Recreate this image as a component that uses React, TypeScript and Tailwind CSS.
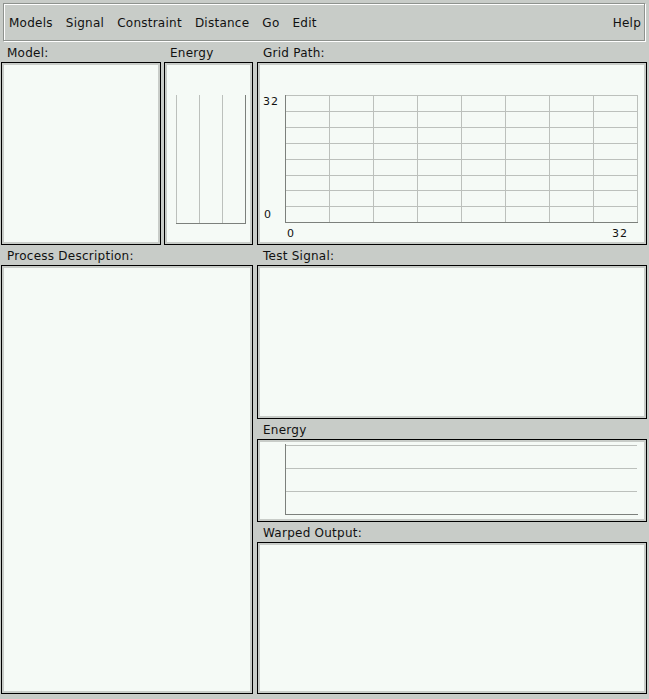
const MENUS = ['Models', 'Signal', 'Constraint', 'Distance', 'Go', 'Edit']

const FONT = "font-['DejaVu_Sans',sans-serif] text-[12px] tracking-[0.25px] text-[#111]"

function Label({ text }: { text: string }) {
  return <div className={`${FONT} h-[20px] leading-[22px] pl-[6px] whitespace-nowrap`}>{text}</div>
}

function Panel({ className = '', children }: { className?: string; children?: React.ReactNode }) {
  return (
    <div className={`border border-black ${className}`}>
      <div className="w-full h-full border-2 border-[#c8ccc8] bg-[#f5faf6] relative overflow-hidden">
        {children}
      </div>
    </div>
  )
}

function GridPath() {
  const cols = Array.from({ length: 9 }, (_, i) => 25 + i * 44)
  const rows = Array.from({ length: 9 }, (_, i) => Math.round(30 + i * 15.9))
  return (
    <svg width="384" height="177" className="block">
      {cols.slice(1).map(x => (
        <line key={'c' + x} x1={x + 0.5} y1={30} x2={x + 0.5} y2={157} stroke="#bcc0bc" />
      ))}
      {rows.slice(0, 8).map(y => (
        <line key={'r' + y} x1={25} y1={y + 0.5} x2={377} y2={y + 0.5} stroke="#bcc0bc" />
      ))}
      <line x1={25.5} y1={30} x2={25.5} y2={158} stroke="#7c807c" />
      <line x1={25} y1={157.5} x2={378} y2={157.5} stroke="#7c807c" />
      <g fontFamily="DejaVu Sans, sans-serif" fontSize="11" letterSpacing="1" fill="#111">
        <text x={3} y={40}>32</text>
        <text x={4} y={153}>0</text>
        <text x={27} y={172}>0</text>
        <text x={352} y={172}>32</text>
      </g>
    </svg>
  )
}

function SmallEnergy() {
  return (
    <svg width="83" height="177" className="block">
      {[9, 32, 55].map(x => (
        <line key={x} x1={x + 0.5} y1={30} x2={x + 0.5} y2={158} stroke="#bcc0bc" />
      ))}
      <line x1={78.5} y1={30} x2={78.5} y2={159} stroke="#7c807c" />
      <line x1={9} y1={158.5} x2={79} y2={158.5} stroke="#7c807c" />
    </svg>
  )
}

function WideEnergy() {
  return (
    <svg width="384" height="77" className="block">
      {[3, 26, 49].map(y => (
        <line key={y} x1={25} y1={y + 0.5} x2={377} y2={y + 0.5} stroke="#bcc0bc" />
      ))}
      <line x1={25.5} y1={2} x2={25.5} y2={73} stroke="#7c807c" />
      <line x1={25} y1={72.5} x2={378} y2={72.5} stroke="#7c807c" />
    </svg>
  )
}

export default function App() {
  return (
    <div className="w-[649px] h-[699px] bg-[#c8ccc8] overflow-hidden flex flex-col">
      {/* Menu bar */}
      <div className="mt-[3px] ml-[3px] w-[642px] h-[38px] border border-[#8e928e] shadow-[inset_1px_1px_0_#ffffff,1px_1px_0_#ffffff] flex items-center pt-[2px] pl-[5px] pr-[3px]">
        <div className={`${FONT} flex gap-[13px]`}>
          {MENUS.map(m => (
            <span key={m}>{m}</span>
          ))}
        </div>
        <span className={`${FONT} ml-auto tracking-[0.8px]`}>Help</span>
      </div>

      <div className="flex pl-[1px] gap-[4px]">
        {/* Left column */}
        <div className="w-[252px] flex flex-col">
          <div className="flex gap-[3px] pt-[1px]">
            <div className="w-[160px] flex flex-col">
              <Label text="Model:" />
              <Panel className="h-[183px]" />
            </div>
            <div className="w-[89px] flex flex-col">
              <Label text="Energy" />
              <Panel className="h-[183px]">
                <SmallEnergy />
              </Panel>
            </div>
          </div>
          <Label text="Process Description:" />
          <Panel className="h-[429px]" />
        </div>

        {/* Right column */}
        <div className="w-[390px] flex flex-col pt-[1px]">
          <Label text="Grid Path:" />
          <Panel className="h-[183px]">
            <GridPath />
          </Panel>
          <Label text="Test Signal:" />
          <Panel className="h-[154px]" />
          <Label text="Energy" />
          <Panel className="h-[83px]">
            <WideEnergy />
          </Panel>
          <Label text="Warped Output:" />
          <Panel className="h-[152px]" />
        </div>
      </div>
    </div>
  )
}
